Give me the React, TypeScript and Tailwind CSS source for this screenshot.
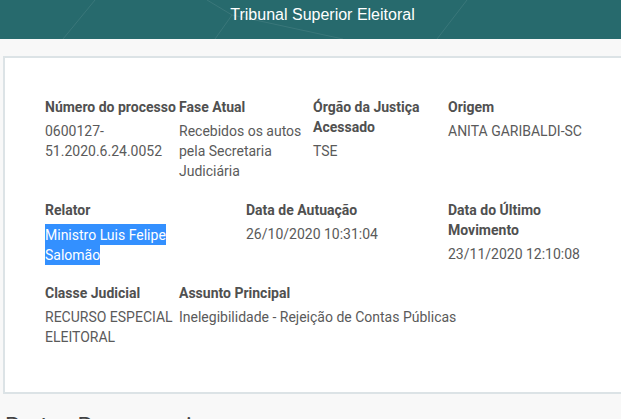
import React from "react";

const roboto = { fontFamily: "Roboto, 'Noto Sans', sans-serif" };

function Field({
  label,
  children,
  w,
  nowrap,
}: {
  label: string;
  children: React.ReactNode;
  w: string;
  nowrap?: boolean;
}) {
  return (
    <div className={`${w} shrink-0`}>
      <div
        className={`text-[14px] leading-[20px] font-bold text-[#505050] ${nowrap ? "whitespace-nowrap" : ""}`}
      >
        {label}
      </div>
      <div className="mt-[4px] text-[14px] leading-[20px] text-[#5a5a5a]">{children}</div>
    </div>
  );
}

export default function App() {
  return (
    <div className="w-full h-[419px] overflow-hidden bg-[#f8f8f8]" style={roboto}>
      <header className="relative h-[39px] bg-[#276a6d] overflow-hidden">
        <svg
          className="absolute inset-0"
          width="621"
          height="39"
          viewBox="0 0 621 39"
          fill="none"
          stroke="rgba(255,255,255,0.09)"
          strokeWidth="1"
        >
          <line x1="95" y1="0" x2="63" y2="39" />
          <line x1="207" y1="0" x2="232" y2="15" />
          <line x1="232" y1="15" x2="215" y2="39" />
          <line x1="232" y1="15" x2="343" y2="39" />
          <line x1="467" y1="0" x2="437" y2="39" />
        </svg>
        <div
          className="relative text-center text-white text-[16px] leading-[28px] pt-[1px] pl-[24px]"
          style={{ fontFamily: "'Liberation Sans', Arial, sans-serif" }}
        >
          Tribunal Superior Eleitoral
        </div>
      </header>

      <div className="pt-[17px] pl-[3px]">
        <div className="w-[700px] bg-white border-2 border-[#dce3e6] pt-[39px] pb-[45px] pl-[40px]">
          <div className="flex mb-[19px]">
            <Field label="Número do processo" w="w-[134px]" nowrap>
              0600127-
              <br />
              51.2020.6.24.0052
            </Field>
            <Field label="Fase Atual" w="w-[134px] pr-[6px]">
              Recebidos os autos pela Secretaria Judiciária
            </Field>
            <Field label="Órgão da Justiça Acessado" w="w-[135px] pr-[6px]">
              TSE
            </Field>
            <Field label="Origem" w="w-[160px]">
              ANITA GARIBALDI-SC
            </Field>
          </div>

          <div className="flex mb-[19px]">
            <Field label="Relator" w="w-[201px] pr-[40px]">
              <span className="bg-[#3390ff] text-white py-[2.5px] box-decoration-clone">
                Ministro Luis Felipe Salomão
              </span>
            </Field>
            <Field label="Data de Autuação" w="w-[202px]">
              26/10/2020 10:31:04
            </Field>
            <Field label="Data do Último Movimento" w="w-[150px] pr-[10px]">
              23/11/2020 12:10:08
            </Field>
          </div>

          <div className="flex">
            <Field label="Classe Judicial" w="w-[134px] pr-[6px]">
              RECURSO ESPECIAL ELEITORAL
            </Field>
            <Field label="Assunto Principal" w="w-[400px]">
              Inelegibilidade - Rejeição de Contas Públicas
            </Field>
          </div>
        </div>

        <h2 className="mt-[18px] ml-[2px] text-[23px] leading-[30px] text-[#444]">
          Partes Processuais
        </h2>
      </div>
    </div>
  );
}
